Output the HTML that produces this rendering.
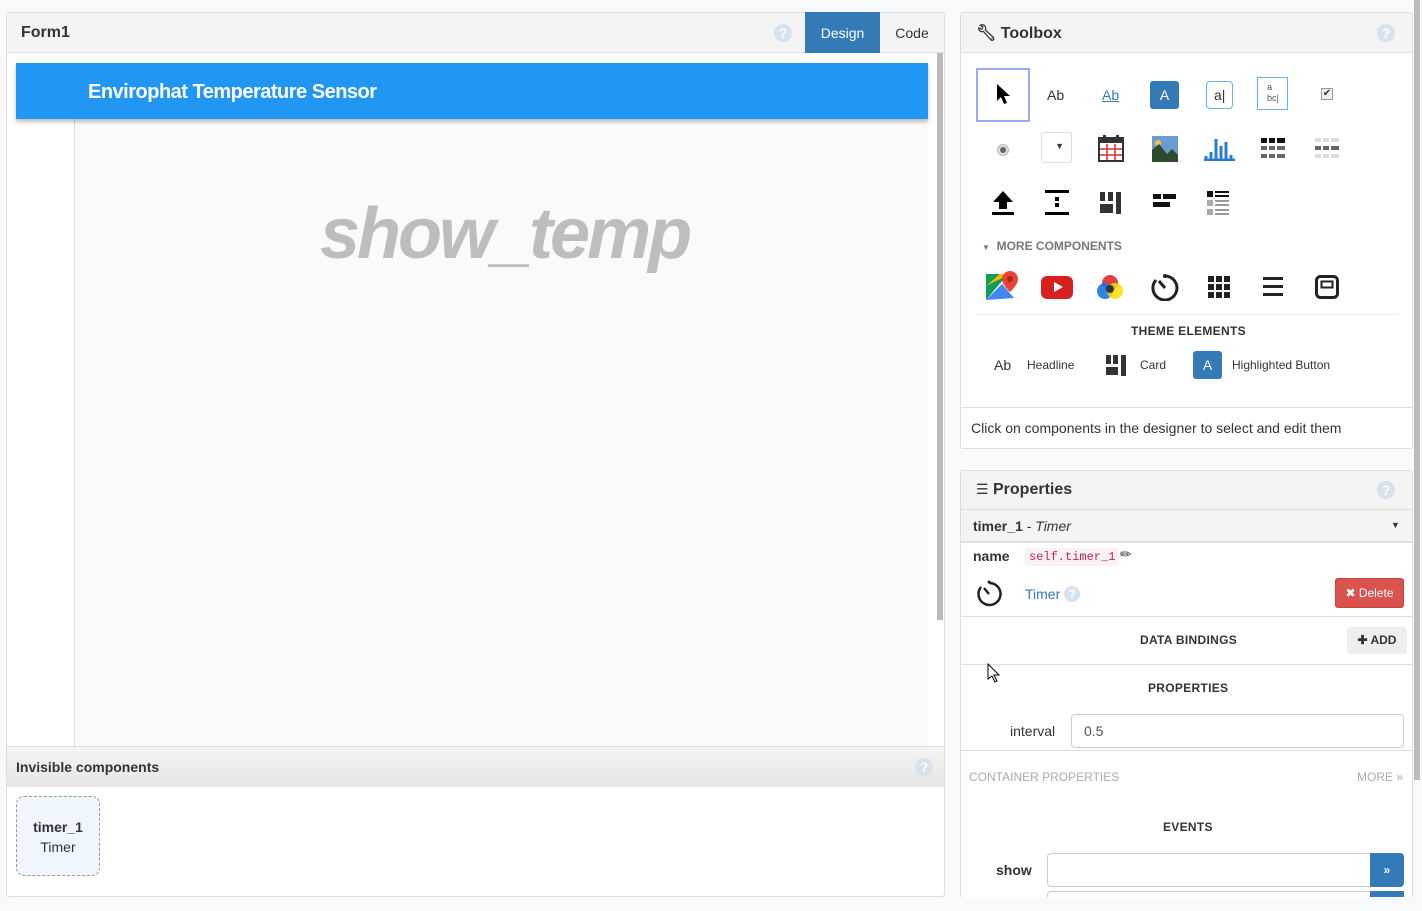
<!DOCTYPE html>
<html><head><meta charset="utf-8"><style>
*{box-sizing:border-box;margin:0;padding:0}
body{width:1422px;height:911px;background:#f8f9fb;font-family:"Liberation Sans",sans-serif;color:#333;position:relative;overflow:hidden;font-size:13px}
.a{position:absolute}
.panel{background:#fff;border:1px solid #ddd;border-radius:3px}
.hdr{background:#f4f4f4;border-bottom:1px solid #ddd}
.q{width:18px;height:18px;border-radius:50%;background:#d6e2ee;color:#fff;font-weight:bold;font-size:14px;text-align:center;line-height:18px}
.cap{font-size:12px;font-weight:bold;letter-spacing:.3px;color:#333}
</style></head><body>

<!-- LEFT PANEL -->
<div class="a panel" style="left:6px;top:12px;width:939px;height:885px"></div>
<div class="a hdr" style="left:7px;top:13px;width:937px;height:40px"></div>
<div class="a" style="left:21px;top:24px;font-size:16px;font-weight:bold;color:#333">Form1</div>
<div class="a q" style="left:774px;top:24px">?</div>
<div class="a" style="left:805px;top:12px;width:75px;height:41px;background:#337ab7;color:#fff;font-size:14px;text-align:center;line-height:42px">Design</div>
<div class="a" style="left:880px;top:12px;width:64px;height:41px;color:#333;font-size:14px;text-align:center;line-height:42px">Code</div>
<div class="a" style="left:74px;top:119px;width:854px;height:627px;background:#fafafa;border-left:1px solid #ddd"></div>
<div class="a" style="left:16px;top:63px;width:912px;height:56px;background:#2196f3;box-shadow:0 3px 4px rgba(0,0,0,.25)"></div>
<div class="a" style="left:88px;top:81px;color:#fff;font-size:20px;font-weight:bold;letter-spacing:-.5px">Envirophat Temperature Sensor</div>
<div class="a" style="left:320px;top:193px;color:#bdbdbd;font-size:72px;font-weight:bold;font-style:italic;letter-spacing:-3px">show_temp</div>
<div class="a" style="left:937px;top:53px;width:6px;height:567px;background:#bbb"></div>
<div class="a" style="left:7px;top:746px;width:937px;height:41px;background:linear-gradient(#f4f4f4,#e6e6e6);border-top:1px solid #ddd"></div>
<div class="a" style="left:16px;top:759px;font-size:14px;font-weight:bold">Invisible components</div>
<div class="a q" style="left:915px;top:758px">?</div>
<div class="a" style="left:16px;top:796px;width:84px;height:80px;background:#f0f6fd;border:1px dashed #999;border-radius:8px;text-align:center;padding-top:20px;font-size:14px;line-height:20px"><b>timer_1</b><br>Timer</div>

<!-- TOOLBOX -->
<div class="a panel" style="left:960px;top:12px;width:453px;height:437px"></div>
<div class="a hdr" style="left:961px;top:13px;width:451px;height:40px"></div>
<div class="a" style="left:976px;top:23px;font-size:16px;font-weight:bold">🔧︎ Toolbox</div>
<div class="a q" style="left:1377px;top:24px">?</div>
<div class="a" style="left:976px;top:68px;width:54px;height:54px;border:2px solid #9aa8f5"></div>
<svg class="a" style="left:995px;top:83px" width="16" height="22"><path d="M2 1v17l4-4 3 7 3-1-3-7h6z" fill="#000"/></svg>
<div class="a" style="left:1047px;top:87px;font-size:14px">Ab</div>
<div class="a" style="left:1102px;top:87px;font-size:14px;color:#337ab7;text-decoration:underline">Ab</div>
<div class="a" style="left:1150px;top:81px;width:29px;height:28px;background:#337ab7;border-radius:3px;color:#fff;font-size:14px;text-align:center;line-height:28px">A</div>
<div class="a" style="left:1206px;top:81px;width:27px;height:28px;border:1px solid #66afe9;border-radius:4px;font-size:14px;padding-left:7px;line-height:26px">a|</div>
<div class="a" style="left:1257px;top:77px;width:31px;height:33px;border:1px solid #66afe9;font-size:9px;padding:4px 0 0 9px;line-height:11px;color:#555">a<br>bc|</div>
<div class="a" style="left:1321px;top:88px;width:12px;height:12px;border:1px solid #999;background:#eee;font-size:10px;line-height:10px;text-align:center">✔</div>
<div class="a" style="left:997px;top:144px;width:12px;height:12px;border-radius:50%;background:#ddd;border:1px solid #bbb"><div style="width:6px;height:6px;margin:2px;border-radius:50%;background:#666"></div></div>
<div class="a" style="left:1041px;top:132px;width:31px;height:31px;border:1px solid #ddd;border-radius:3px;font-size:9px;text-align:right;padding:8px 7px 0 0">▼</div>
<svg class="a" style="left:1098px;top:135px" width="26" height="27"><rect x="1" y="3" width="24" height="23" fill="#fff" stroke="#333" stroke-width="2"/><rect x="1" y="3" width="24" height="5" fill="#333"/><path d="M9 9v16M17 9v16M2 14h22M2 20h22" stroke="#c33" stroke-width="1.5"/><rect x="5" y="0" width="3" height="6" fill="#333"/><rect x="18" y="0" width="3" height="6" fill="#333"/></svg>
<svg class="a" style="left:1152px;top:136px" width="26" height="26"><rect width="26" height="26" fill="#6a9bd1"/><circle cx="6" cy="7" r="3" fill="#f5c542"/><path d="M0 26V14l7-6 8 10 5-5 6 6v7z" fill="#2d4a2b"/></svg>
<svg class="a" style="left:1203px;top:137px" width="32" height="24"><path d="M1 23h31M3 19v4M8 15v8M13 2v21M18 9v14M23 5v18M28 18v5" stroke="#2b7bd1" stroke-width="3"/></svg>
<svg class="a" style="left:1261px;top:137px" width="24" height="24"><rect y="1" width="24" height="5" fill="#111"/><rect y="9" width="24" height="4" fill="#666"/><rect y="17" width="24" height="4" fill="#666"/><path d="M7 0v24M15 0v24" stroke="#fff" stroke-width="2"/></svg>
<svg class="a" style="left:1315px;top:137px" width="24" height="24"><rect y="1" width="24" height="4" fill="#ddd"/><rect y="9" width="24" height="4" fill="#666"/><rect y="17" width="24" height="4" fill="#ddd"/><path d="M7 0v24M15 0v24" stroke="#fff" stroke-width="2"/></svg>
<svg class="a" style="left:992px;top:190px" width="22" height="25"><path d="M11 1L1 12h6v7h8v-7h6z" fill="#000"/><rect y="22" width="22" height="3" fill="#000"/></svg>
<svg class="a" style="left:1045px;top:190px" width="24" height="25"><rect width="24" height="3"/><rect y="22" width="24" height="3"/><rect x="10" y="7" width="4" height="4"/><rect x="10" y="13" width="4" height="4"/></svg>
<svg class="a" style="left:1100px;top:192px" width="22" height="22"><rect x="0" width="5" height="9" fill="#333"/><rect x="8" width="5" height="9" fill="#333"/><rect x="0" y="12" width="13" height="9" fill="#333"/><rect x="16" width="5" height="22" fill="#333"/></svg>
<svg class="a" style="left:1153px;top:194px" width="24" height="16"><rect width="8" height="5" fill="#111"/><rect x="10" width="13" height="5" fill="#111"/><rect y="8" width="17" height="5" fill="#111"/></svg>
<svg class="a" style="left:1207px;top:191px" width="23" height="24"><rect width="6" height="6" fill="#111"/><rect y="9" width="6" height="6" fill="#aaa"/><rect y="18" width="6" height="6" fill="#aaa"/><path d="M8 1h14M8 5h14M8 10h14M8 14h14M8 19h14M8 23h14" stroke="#999" stroke-width="2"/><path d="M8 1h14M8 5h14" stroke="#111" stroke-width="2"/></svg>
<div class="a" style="left:982px;top:239px;font-size:12px;font-weight:bold;color:#777"><span style="font-size:8px">▼</span>&nbsp; MORE COMPONENTS</div>
<svg class="a" style="left:986px;top:270px" width="34" height="32"><path d="M0 4h22l-22 26z" fill="#0f9d58"/><path d="M0 30l16-16 12 14z" fill="#4285f4"/><path d="M0 16l14-12h10z" fill="#fbbc04"/><path d="M24 1a8 8 0 0 1 8 8c0 6-8 13-8 13s-8-7-8-13a8 8 0 0 1 8-8z" fill="#ea4335"/><circle cx="24" cy="9" r="3" fill="#a52714"/></svg>
<div class="a" style="left:1041px;top:276px;width:32px;height:23px;background:#d62020;border-radius:6px"><div style="margin:6px 0 0 13px;border-left:9px solid #fff;border-top:5px solid transparent;border-bottom:5px solid transparent;width:0"></div></div>
<svg class="a" style="left:1096px;top:273px" width="28" height="28"><circle cx="14" cy="10" r="8" fill="#e04040"/><circle cx="9" cy="18" r="8" fill="#1a73e8" opacity=".9"/><circle cx="19" cy="18" r="8" fill="#fbdc04" opacity=".85"/><circle cx="14" cy="16" r="4" fill="#333"/></svg>
<svg class="a" style="left:1151px;top:273px" width="28" height="28"><path d="M14 3a12 12 0 1 1-9 4" fill="none" stroke="#222" stroke-width="3"/><path d="M14 15L8 8" stroke="#222" stroke-width="3"/><circle cx="14" cy="3" r="2" fill="#222"/></svg>
<svg class="a" style="left:1208px;top:276px" width="22" height="22"><g fill="#222"><rect width="6" height="6"/><rect x="8" width="6" height="6"/><rect x="16" width="6" height="6"/><rect y="8" width="6" height="6"/><rect x="8" y="8" width="6" height="6"/><rect x="16" y="8" width="6" height="6"/><rect y="16" width="6" height="6"/><rect x="8" y="16" width="6" height="6"/><rect x="16" y="16" width="6" height="6"/></g></svg>
<svg class="a" style="left:1263px;top:277px" width="20" height="20"><rect width="20" height="3" fill="#222"/><rect y="8" width="20" height="3" fill="#222"/><rect y="16" width="20" height="3" fill="#222"/></svg>
<svg class="a" style="left:1315px;top:275px" width="24" height="24"><rect x="1.5" y="1.5" width="21" height="21" rx="4" fill="none" stroke="#222" stroke-width="3"/><rect x="6.5" y="6.5" width="11" height="6" fill="none" stroke="#222" stroke-width="2"/></svg>
<div class="a" style="left:976px;top:314px;width:421px;border-top:1px solid #eee"></div>
<div class="a cap" style="left:1131px;top:324px">THEME ELEMENTS</div>
<div class="a" style="left:994px;top:357px;font-size:14px">Ab</div>
<div class="a" style="left:1027px;top:358px;font-size:12px">Headline</div>
<svg class="a" style="left:1106px;top:355px" width="21" height="21"><rect width="5" height="9" fill="#333"/><rect x="7" width="5" height="9" fill="#333"/><rect y="12" width="12" height="8" fill="#333"/><rect x="15" width="5" height="21" fill="#333"/></svg>
<div class="a" style="left:1140px;top:358px;font-size:12px">Card</div>
<div class="a" style="left:1193px;top:351px;width:29px;height:28px;background:#337ab7;border-radius:3px;color:#fff;font-size:14px;text-align:center;line-height:28px">A</div>
<div class="a" style="left:1232px;top:358px;font-size:12px">Highlighted Button</div>
<div class="a" style="left:961px;top:407px;width:451px;border-top:1px solid #ddd"></div>
<div class="a" style="left:971px;top:420px;font-size:14px">Click on components in the designer to select and edit them</div>

<!-- PROPERTIES -->
<div class="a panel" style="left:960px;top:470px;width:453px;height:430px"></div>
<div class="a hdr" style="left:961px;top:471px;width:451px;height:39px"></div>
<div class="a" style="left:976px;top:481px;font-size:16px;font-weight:bold"><span style="font-weight:normal;font-size:14px">☰</span> Properties</div>
<div class="a q" style="left:1377px;top:481px">?</div>
<div class="a" style="left:961px;top:510px;width:451px;height:33px;background:#f4f4f4;border-bottom:2px solid #ddd"></div>
<div class="a" style="left:973px;top:518px;font-size:14px"><b>timer_1</b> - <i>Timer</i></div>
<div class="a" style="left:1391px;top:520px;font-size:9px">▼</div>
<div class="a" style="left:973px;top:548px;font-size:14px;font-weight:bold">name</div>
<div class="a" style="left:1025px;top:548px;background:#f9f2f4;color:#c7254e;font-family:'Liberation Mono',monospace;font-size:12px;padding:2px 4px;border-radius:3px">self.timer_1</div>
<div class="a" style="left:1120px;top:546px;font-size:14px">✏</div>
<svg class="a" style="left:975px;top:579px" width="28" height="28"><path d="M14 4a11 11 0 1 1-8 4" fill="none" stroke="#222" stroke-width="2.5"/><path d="M14 15L9 9" stroke="#222" stroke-width="2.5"/><circle cx="14" cy="3" r="1.5" fill="#222"/></svg>
<div class="a" style="left:1025px;top:586px;font-size:14px;color:#337ab7">Timer</div>
<div class="a q" style="left:1064px;top:586px;width:16px;height:16px;line-height:16px;font-size:12px">?</div>
<div class="a" style="left:1335px;top:578px;width:69px;height:30px;background:#d9534f;border:1px solid #d43f3a;border-radius:3px;color:#fff;font-size:12px;text-align:center;line-height:28px">✖ Delete</div>
<div class="a" style="left:961px;top:616px;width:451px;border-top:1px solid #ddd"></div>
<div class="a cap" style="left:1140px;top:633px">DATA BINDINGS</div>
<div class="a" style="left:1347px;top:627px;width:60px;height:27px;background:#eee;border-radius:3px;font-size:12px;font-weight:bold;text-align:center;line-height:27px">✚ ADD</div>
<div class="a" style="left:961px;top:664px;width:451px;border-top:1px solid #ddd"></div>
<svg class="a" style="left:987px;top:663px" width="14" height="20"><path d="M1 1v15l4-3 3 6 2-1-3-6h5z" fill="#fff" stroke="#000"/></svg>
<div class="a cap" style="left:1148px;top:681px">PROPERTIES</div>
<div class="a" style="left:1010px;top:723px;font-size:14px">interval</div>
<div class="a" style="left:1071px;top:714px;width:333px;height:34px;border:1px solid #ccc;border-radius:4px;font-size:14px;color:#555;padding:8px 12px">0.5</div>
<div class="a" style="left:961px;top:750px;width:451px;border-top:1px solid #ddd"></div>
<div class="a" style="left:969px;top:770px;font-size:12px;color:#aaa">CONTAINER PROPERTIES</div>
<div class="a" style="left:1357px;top:770px;font-size:12px;color:#aaa">MORE »</div>
<div class="a cap" style="left:1163px;top:820px">EVENTS</div>
<div class="a" style="left:996px;top:862px;font-size:14px;font-weight:bold">show</div>
<div class="a" style="left:1047px;top:853px;width:324px;height:34px;border:1px solid #ccc;border-radius:4px 0 0 4px"></div>
<div class="a" style="left:1370px;top:853px;width:34px;height:34px;background:#337ab7;border-radius:0 4px 4px 0;color:#fff;text-align:center;line-height:34px;font-size:12px;font-weight:bold">»</div>
<div class="a" style="left:1047px;top:891px;width:324px;height:10px;border:1px solid #ccc;border-radius:4px 0 0 0"></div>
<div class="a" style="left:1370px;top:891px;width:34px;height:10px;background:#337ab7"></div>
<div class="a" style="left:0;top:897px;width:1422px;height:14px;background:#f8f9fb"></div>
<div class="a" style="left:1414px;top:0;width:6px;height:780px;background:#bbb"></div>
</body></html>
